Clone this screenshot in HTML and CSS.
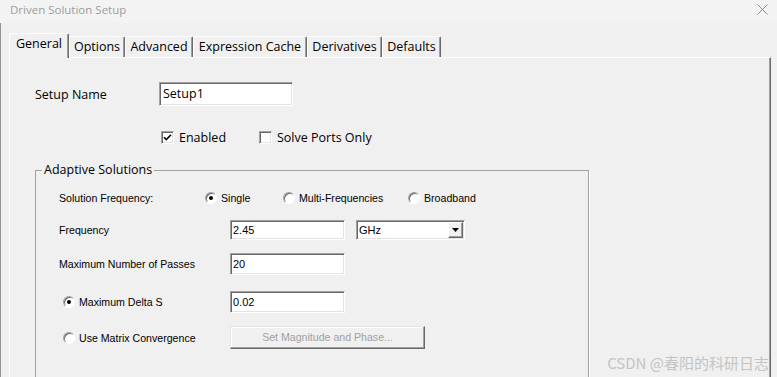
FILE: index.html
```html
<!DOCTYPE html>
<html lang="en">
<head>
  <meta charset="UTF-8" />
  <title>Driven Solution Setup</title>
  <link rel="stylesheet" href="styles.css">
</head>
<body>
  <div class="dialog">
    <div class="titlebar">
      <span class="title">Driven Solution Setup</span>
      <svg class="close" width="11" height="11" viewBox="0 0 11 11">
        <path d="M0.5 0.5 L10.5 10.5 M10.5 0.5 L0.5 10.5" stroke="#8a8a8a" stroke-width="1" fill="none"/>
      </svg>
    </div>

    <div class="dialog-body">
      <div class="tabs">
        <div class="tab active w-general">General</div>
        <div class="tab w-options">Options</div>
        <div class="tab w-advanced">Advanced</div>
        <div class="tab w-cache">Expression Cache</div>
        <div class="tab w-deriv">Derivatives</div>
        <div class="tab w-defaults">Defaults</div>
      </div>

      <div class="panel">
        <div class="name-row">
          <span class="name-label">Setup Name</span>
          <div class="field name-field">Setup1</div>
        </div>

        <div class="check-row">
          <div class="check check-enabled">
            <span class="box">
              <svg width="9" height="9" viewBox="0 0 9 9">
                <path d="M1 4.2 L3.3 6.6 L8 1.8" stroke="#000" stroke-width="1.6" fill="none"/>
              </svg>
            </span>
            <span>Enabled</span>
          </div>
          <div class="check">
            <span class="box"></span>
            <span>Solve Ports Only</span>
          </div>
        </div>

        <fieldset class="group">
          <legend>Adaptive Solutions</legend>
          <div class="group-body">
            <div class="freq-row">
              <span class="freq-label">Solution Frequency:</span>
              <div class="opt opt-single"><span class="radio on"></span>Single</div>
              <div class="opt opt-multi"><span class="radio"></span>Multi-Frequencies</div>
              <div class="opt"><span class="radio"></span>Broadband</div>
            </div>

            <div class="row row-freq">
              <span class="row-label">Frequency</span>
              <div class="field small-field short">2.45</div>
              <div class="field select">
                <span>GHz</span>
                <span class="drop"><svg width="7" height="4" viewBox="0 0 7 4"><path d="M0 0 H7 L3.5 4 Z" fill="#000"/></svg></span>
              </div>
            </div>

            <div class="row row-passes">
              <span class="row-label">Maximum Number of Passes</span>
              <div class="field small-field">20</div>
            </div>

            <div class="row row-delta">
              <span class="row-label indent"><span class="radio on"></span>Maximum Delta S</span>
              <div class="field small-field">0.02</div>
            </div>

            <div class="row row-matrix">
              <span class="row-label indent"><span class="radio"></span>Use Matrix Convergence</span>
              <div class="btn disabled">Set Magnitude and Phase...</div>
            </div>
          </div>
        </fieldset>
      </div>
    </div>

    <div class="watermark">CSDN @春阳的科研日志</div>
  </div>
</body>
</html>
```

FILE: styles.css
```css
* {
  box-sizing: border-box;
}

body {
  margin: 0;
  background: #f0f0f0;
  font-family: 'Open Sans', sans-serif;
  color: #000;
  overflow: hidden;
}

.dialog {
  width: 777px;
  height: 377px;
  position: relative;
  overflow: hidden;
}

.titlebar {
  height: 23px;
  background: #f3f3f3;
  display: flex;
  align-items: center;
  justify-content: space-between;
  padding: 0 9px 4px 10px;
}

.title {
  font-size: 11.5px;
  color: #9d9d9d;
}

.dialog-body {
  height: 354px;
  box-shadow: inset 1px 0 0 #949494;
}

/* tab strip */
.tabs {
  display: flex;
  align-items: flex-end;
  padding: 10px 0 0 9px;
  height: 34px;
}

.tab {
  height: 21px;
  font-size: 12.5px;
  line-height: 19px;
  text-align: center;
  border-top: 1px solid #fff;
  border-left: 1px solid #fff;
  border-right: 1px solid #696969;
  box-shadow: inset -1px 0 0 #a0a0a0;
  border-radius: 2px 2px 0 0;
}

.tab.active {
  height: 25px;
  margin-bottom: -1px;
  background: #f0f0f0;
  position: relative;
  z-index: 1;
  line-height: 20px;
  padding-bottom: 3px;
}

.w-general { width: 60px; }
.w-options { width: 56px; }
.w-advanced { width: 68px; }
.w-cache { width: 114px; }
.w-deriv { width: 75px; }
.w-defaults { width: 59px; }

/* tab page */
.panel {
  margin-left: 9px;
  width: 762px;
  height: 320px;
  border-top: 1px solid #fff;
  border-left: 1px solid #fff;
  border-right: 1px solid #696969;
  box-shadow: inset -1px 0 0 #a0a0a0;
  padding: 24px 0 0 25px;
  font-size: 12.5px;
}

.name-row {
  display: flex;
  align-items: center;
  height: 24px;
}

.name-label {
  width: 124px;
}

.field {
  background: #fff;
  border: 1px solid;
  border-color: #a0a0a0 #fff #fff #a0a0a0;
  box-shadow: inset 1px 1px 0 #696969, inset -1px -1px 0 #e3e3e3;
  display: flex;
  align-items: center;
}

.name-field {
  width: 134px;
  height: 24px;
  padding: 0 0 2px 3px;
}

.check-row {
  display: flex;
  align-items: center;
  height: 18px;
  margin-top: 22px;
  padding-left: 126px;
}

.check {
  display: flex;
  align-items: center;
  gap: 5px;
}

.check-enabled {
  width: 98px;
}

.box {
  width: 13px;
  height: 13px;
  background: #fff;
  border: 1px solid;
  border-color: #a0a0a0 #fff #fff #a0a0a0;
  box-shadow: inset 1px 1px 0 #696969, inset -1px -1px 0 #e3e3e3;
  display: flex;
  align-items: center;
  justify-content: center;
}

/* group box */
.group {
  margin: 15px 0 0 0;
  padding: 0;
  width: 554px;
  height: 220px;
  border: 1px solid #a0a0a0;
  box-shadow: 1px 1px 0 #fff;
}

.group legend {
  margin-left: 6px;
  padding: 0 2px;
  line-height: 18px;
  font-size: 12.5px;
}

.group-body {
  padding: 11px 0 0 23px;
  font-family: 'Liberation Sans', Arial, sans-serif;
  font-size: 10.6px;
}

.freq-row {
  display: flex;
  align-items: center;
  height: 16px;
}

.freq-label {
  width: 146px;
}

.opt {
  display: flex;
  align-items: center;
  gap: 4px;
}

.opt-single { width: 78px; }
.opt-multi { width: 125px; }

.radio {
  width: 12px;
  height: 12px;
  border-radius: 50%;
  background: #fff;
  border: 1px solid;
  border-color: #a0a0a0 #fff #fff #a0a0a0;
  box-shadow: inset 1px 1px 0 #696969;
  display: inline-flex;
  align-items: center;
  justify-content: center;
  flex-shrink: 0;
}

.radio.on::after {
  content: '';
  width: 4px;
  height: 4px;
  border-radius: 50%;
  background: #000;
}

.row {
  display: flex;
  align-items: center;
}

.row-label {
  width: 171px;
  display: flex;
  align-items: center;
}

.row-label.indent {
  padding-left: 4px;
  gap: 4px;
}

.row-freq { margin-top: 14px; }
.row-passes { margin-top: 13px; }
.row-delta { margin-top: 16px; }
.row-matrix { margin-top: 13px; }

.small-field {
  width: 115px;
  height: 22px;
  padding-left: 2px;
  font-size: 11px;
}

.small-field.short {
  height: 20px;
}

.select {
  width: 109px;
  height: 20px;
  margin-left: 11px;
  padding-left: 2px;
  justify-content: space-between;
  font-size: 11px;
}

.drop {
  width: 15px;
  height: 16px;
  margin-right: 1px;
  background: #f0f0f0;
  border: 1px solid;
  border-color: #fff #696969 #696969 #fff;
  box-shadow: inset -1px -1px 0 #a0a0a0;
  display: flex;
  align-items: center;
  justify-content: center;
}

.btn {
  width: 195px;
  height: 23px;
  background: #f0f0f0;
  border: 1px solid;
  border-color: #e3e3e3 #696969 #696969 #e3e3e3;
  box-shadow: inset -1px -1px 0 #a0a0a0, inset 1px 1px 0 #fff;
  display: flex;
  align-items: center;
  justify-content: center;
  padding-bottom: 1px;
}

.btn.disabled {
  color: #a0a0a0;
}

.watermark {
  position: absolute;
  right: 8px;
  bottom: 4px;
  font-family: 'Noto Sans CJK SC', sans-serif;
  font-size: 15px;
  line-height: 20px;
  color: #c4c4c4;
}
```
